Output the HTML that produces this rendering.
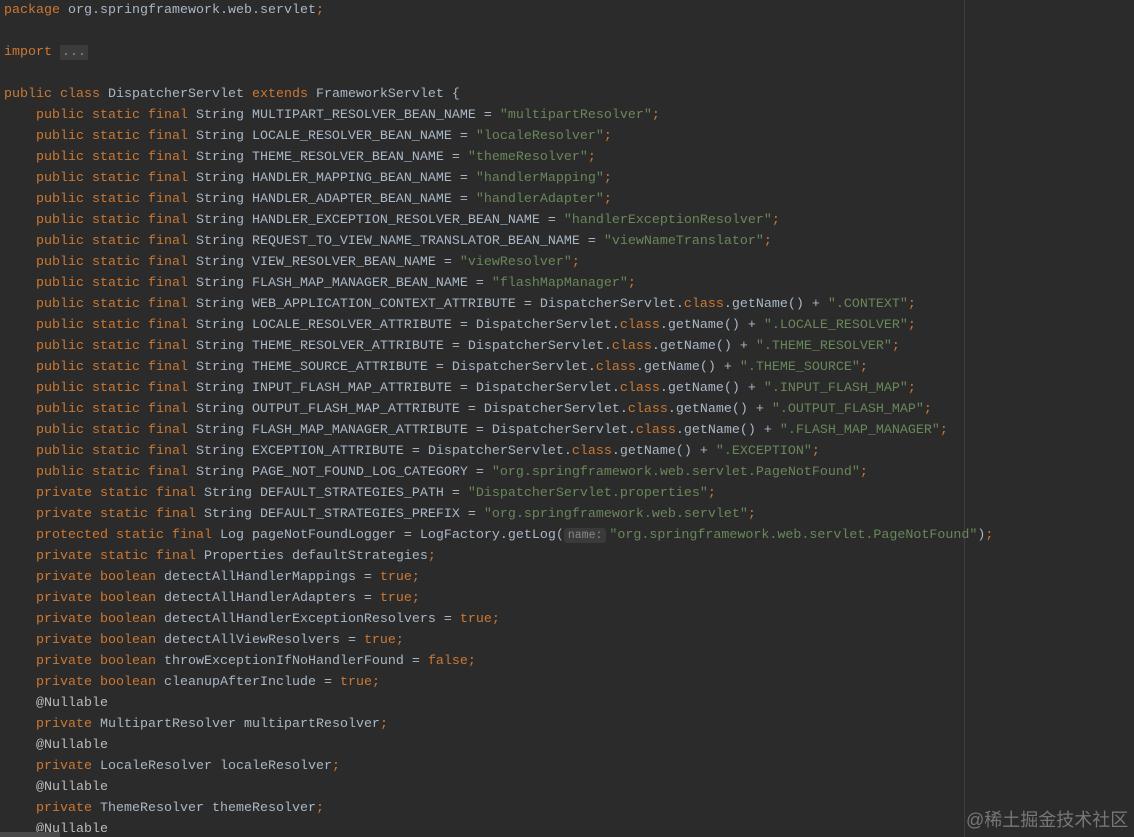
<!DOCTYPE html>
<html><head><meta charset="utf-8"><style>
html,body{margin:0;padding:0;background:#2b2b2b;width:1134px;height:837px;overflow:hidden;position:relative}
pre{margin:0;position:absolute;left:4px;top:0px;font-family:"Liberation Mono",monospace;font-size:13.33px;line-height:21px;color:#a9b7c6;white-space:pre}
.k{color:#cc7832}.s{color:#6a8759}.a{color:#bbbbbb}
.f{background:#3b3b3b;color:#888;padding:0 2px}
.h{background:#3a3a3a;color:#888;border-radius:3px;font-size:11.5px;padding:1px 4px;margin-right:3px}
.vl{position:absolute;left:964px;top:0;width:1px;height:837px;background:#3d3d3d}
.wm{position:absolute;left:966px;top:806px;font-family:"Liberation Sans","Noto Sans CJK SC",sans-serif;font-size:18px;color:#777}
.sb{position:absolute;left:0;top:832px;width:60px;height:5px;background:#4a4a4a}
</style></head><body>
<div class="vl"></div>
<pre><span class="k">package</span> org.springframework.web.servlet<span class="k">;</span>

<span class="k">import</span> <span class="f">...</span>

<span class="k">public class</span> DispatcherServlet <span class="k">extends</span> FrameworkServlet {
    <span class="k">public static final</span> String MULTIPART_RESOLVER_BEAN_NAME = <span class="s">"multipartResolver"</span><span class="k">;</span>
    <span class="k">public static final</span> String LOCALE_RESOLVER_BEAN_NAME = <span class="s">"localeResolver"</span><span class="k">;</span>
    <span class="k">public static final</span> String THEME_RESOLVER_BEAN_NAME = <span class="s">"themeResolver"</span><span class="k">;</span>
    <span class="k">public static final</span> String HANDLER_MAPPING_BEAN_NAME = <span class="s">"handlerMapping"</span><span class="k">;</span>
    <span class="k">public static final</span> String HANDLER_ADAPTER_BEAN_NAME = <span class="s">"handlerAdapter"</span><span class="k">;</span>
    <span class="k">public static final</span> String HANDLER_EXCEPTION_RESOLVER_BEAN_NAME = <span class="s">"handlerExceptionResolver"</span><span class="k">;</span>
    <span class="k">public static final</span> String REQUEST_TO_VIEW_NAME_TRANSLATOR_BEAN_NAME = <span class="s">"viewNameTranslator"</span><span class="k">;</span>
    <span class="k">public static final</span> String VIEW_RESOLVER_BEAN_NAME = <span class="s">"viewResolver"</span><span class="k">;</span>
    <span class="k">public static final</span> String FLASH_MAP_MANAGER_BEAN_NAME = <span class="s">"flashMapManager"</span><span class="k">;</span>
    <span class="k">public static final</span> String WEB_APPLICATION_CONTEXT_ATTRIBUTE = DispatcherServlet.<span class="k">class</span>.getName() + <span class="s">".CONTEXT"</span><span class="k">;</span>
    <span class="k">public static final</span> String LOCALE_RESOLVER_ATTRIBUTE = DispatcherServlet.<span class="k">class</span>.getName() + <span class="s">".LOCALE_RESOLVER"</span><span class="k">;</span>
    <span class="k">public static final</span> String THEME_RESOLVER_ATTRIBUTE = DispatcherServlet.<span class="k">class</span>.getName() + <span class="s">".THEME_RESOLVER"</span><span class="k">;</span>
    <span class="k">public static final</span> String THEME_SOURCE_ATTRIBUTE = DispatcherServlet.<span class="k">class</span>.getName() + <span class="s">".THEME_SOURCE"</span><span class="k">;</span>
    <span class="k">public static final</span> String INPUT_FLASH_MAP_ATTRIBUTE = DispatcherServlet.<span class="k">class</span>.getName() + <span class="s">".INPUT_FLASH_MAP"</span><span class="k">;</span>
    <span class="k">public static final</span> String OUTPUT_FLASH_MAP_ATTRIBUTE = DispatcherServlet.<span class="k">class</span>.getName() + <span class="s">".OUTPUT_FLASH_MAP"</span><span class="k">;</span>
    <span class="k">public static final</span> String FLASH_MAP_MANAGER_ATTRIBUTE = DispatcherServlet.<span class="k">class</span>.getName() + <span class="s">".FLASH_MAP_MANAGER"</span><span class="k">;</span>
    <span class="k">public static final</span> String EXCEPTION_ATTRIBUTE = DispatcherServlet.<span class="k">class</span>.getName() + <span class="s">".EXCEPTION"</span><span class="k">;</span>
    <span class="k">public static final</span> String PAGE_NOT_FOUND_LOG_CATEGORY = <span class="s">"org.springframework.web.servlet.PageNotFound"</span><span class="k">;</span>
    <span class="k">private static final</span> String DEFAULT_STRATEGIES_PATH = <span class="s">"DispatcherServlet.properties"</span><span class="k">;</span>
    <span class="k">private static final</span> String DEFAULT_STRATEGIES_PREFIX = <span class="s">"org.springframework.web.servlet"</span><span class="k">;</span>
    <span class="k">protected static final</span> Log pageNotFoundLogger = LogFactory.getLog(<span class="h">name:</span><span class="s">"org.springframework.web.servlet.PageNotFound"</span>)<span class="k">;</span>
    <span class="k">private static final</span> Properties defaultStrategies<span class="k">;</span>
    <span class="k">private boolean</span> detectAllHandlerMappings = <span class="k">true;</span>
    <span class="k">private boolean</span> detectAllHandlerAdapters = <span class="k">true;</span>
    <span class="k">private boolean</span> detectAllHandlerExceptionResolvers = <span class="k">true;</span>
    <span class="k">private boolean</span> detectAllViewResolvers = <span class="k">true;</span>
    <span class="k">private boolean</span> throwExceptionIfNoHandlerFound = <span class="k">false;</span>
    <span class="k">private boolean</span> cleanupAfterInclude = <span class="k">true;</span>
    <span class="a">@Nullable</span>
    <span class="k">private</span> MultipartResolver multipartResolver<span class="k">;</span>
    <span class="a">@Nullable</span>
    <span class="k">private</span> LocaleResolver localeResolver<span class="k">;</span>
    <span class="a">@Nullable</span>
    <span class="k">private</span> ThemeResolver themeResolver<span class="k">;</span>
    <span class="a">@Nullable</span></pre>
<div class="wm">@稀土掘金技术社区</div>
<div class="sb"></div>
</body></html>
